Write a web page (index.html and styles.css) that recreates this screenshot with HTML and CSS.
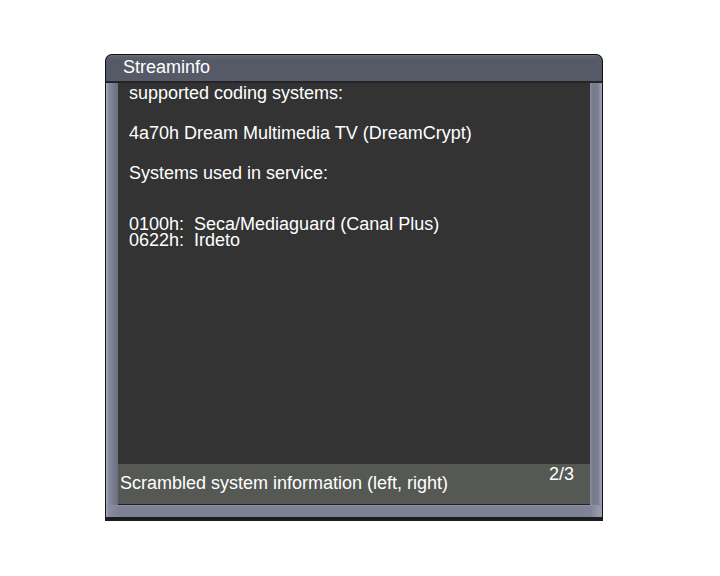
FILE: index.html
```html
<!DOCTYPE html>
<html lang="en">
<head>
    <meta charset="UTF-8">
    <meta name="viewport" content="width=device-width, initial-scale=1.0">
    <title>Streaminfo</title>
    <link rel="stylesheet" href="styles.css">
</head>

<body>
    <div class="window">
        <div class="titlebar">Streaminfo</div>

        <div class="frame">
            <div class="side side-left"></div>

            <div class="main">
                <div class="info">
                    <p class="line">supported coding systems:</p>
                    <p class="line gap">4a70h Dream Multimedia TV (DreamCrypt)</p>
                    <p class="line gap">Systems used in service:</p>

                    <div class="caids">
                        <p class="caid">0100h:  Seca/Mediaguard (Canal Plus)</p>
                        <p class="caid">0622h:  Irdeto</p>
                    </div>
                </div>

                <!-- Barra de estado inferior -->
                <div class="statusbar">
                    <span class="status-text">Scrambled system information (left, right)</span>
                    <span class="page">2/3</span>
                </div>
            </div>

            <div class="side side-right"></div>
        </div>

        <div class="bottom"></div>
    </div>
</body>
</html>
```

FILE: styles.css
```css
body {
    margin: 0;
    padding: 54px 0 0 105px;
    background-color: #ffffff;
    font-family: 'Liberation Sans', Arial, sans-serif;
    font-size: 18px;
    color: #ffffff;
}

.window {
    width: 496px;
    border: 1px solid #111111;
    border-bottom: 4px solid #1c1c1e;
    border-radius: 7px 7px 0 0;
    background-color: #1c1c1e;
}

.titlebar {
    height: 24px;
    line-height: 24px;
    padding: 0 0 2px 17px;
    border-radius: 6px 6px 0 0;
    background: linear-gradient(#6e727e 0, #5b606c 2px, #555a66 6px, #555a66);
    border-bottom: 2px solid #242428;
}

.frame {
    display: flex;
}

.side {
    width: 12px;
}

/* Bordes laterales con degradado */
.side-left {
    background: linear-gradient(to right, #a3a7bb 0, #a3a7bb 1px, #8a8ea2 2px, #747889 8px, #6a6e7e 12px);
}

.side-right {
    background: linear-gradient(to right, #8a8e9f 0, #767a8a 3px, #7a7e8f 8px, #9a9eb2 11px, #9a9eb2 12px);
}

.main {
    flex: 1;
    display: flex;
    flex-direction: column;
    border-bottom: 1px solid #222226;
}

.info {
    height: 381px;
    padding-left: 11px;
    background-color: #333333;
}

.line {
    margin: 0;
    line-height: 20px;
}

.gap {
    margin-top: 20px;
}

.caids {
    margin-top: 33px;
}

.caid {
    margin: 0;
    line-height: 16px;
    white-space: pre;
}

.statusbar {
    height: 40px;
    display: flex;
    justify-content: space-between;
    background-color: #565854;
}

.status-text {
    padding: 9px 0 0 2px;
    line-height: 20px;
}

.page {
    padding: 0 16px 0 0;
    line-height: 20px;
}

.bottom {
    height: 12px;
    background: linear-gradient(to right, #a3a7bb 0, #a3a7bb 1px, #8a8ea2 2px, #7e8294 12px, #7e8294 484px, #9a9eb2 495px);
    box-shadow: inset 0 1px 0 #8c90a3;
}
```
